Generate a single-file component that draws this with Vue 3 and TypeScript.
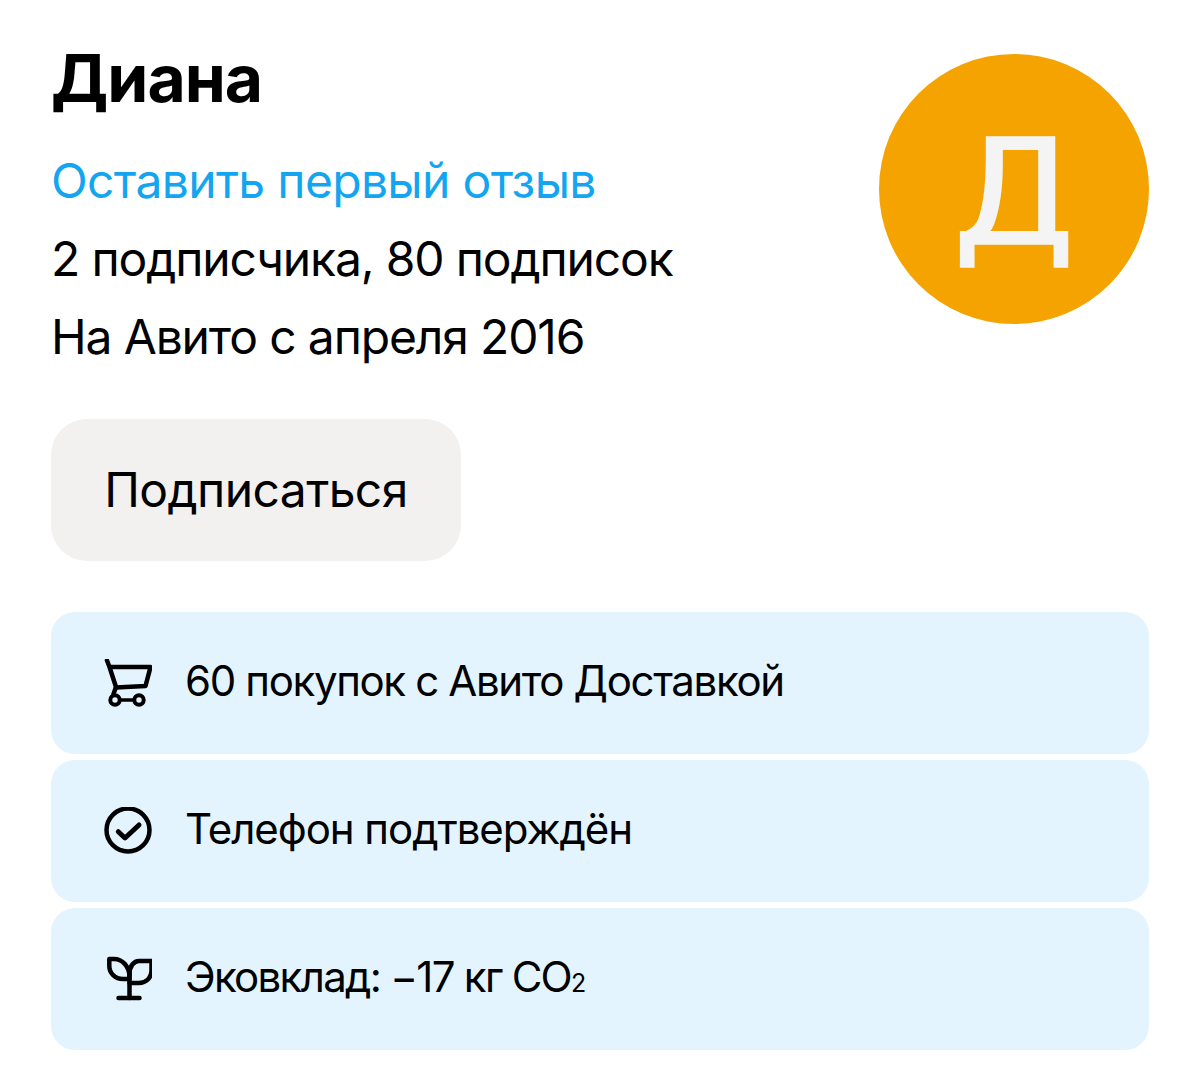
<script setup lang="ts">
interface Badge { id: string; text: string }
const badges: Badge[] = [
  { id: 'cart', text: '60 покупок с Авито Доставкой' },
  { id: 'check', text: 'Телефон подтверждён' },
  { id: 'eco', text: 'Эковклад: −17 кг CO' },
]
</script>

<template>
  <main class="page">
    <section class="head">
      <div class="info">
        <h1 class="name">Диана</h1>
        <a class="link">Оставить первый отзыв</a>
        <p class="line">2 подписчика, 80 подписок</p>
        <p class="line">На Авито с апреля 2016</p>
      </div>
      <div class="avatar"><span>Д</span></div>
    </section>
    <button class="subscribe">Подписаться</button>
    <ul class="badges">
      <li v-for="b in badges" :key="b.id" class="badge">
        <svg class="icon" viewBox="0 0 48 48" fill="none" stroke="#000" stroke-width="4.500" stroke-linecap="round" stroke-linejoin="round">
          <template v-if="b.id === 'cart'">
            <path d="M3 1.500 L5.500 8 L12 28 L9.500 35"/>
            <path d="M6 8 H46.500 L41.500 27 L12 28.500"/>
            <circle cx="11" cy="41" r="4.700" stroke-width="4"/>
            <circle cx="35" cy="41" r="4.700" stroke-width="4"/>
            <path d="M16 41 H30" stroke-width="3.500"/>
          </template>
          <template v-else-if="b.id === 'check'">
            <circle cx="24" cy="23" r="21.500"/>
            <path d="M14.300 24.700 L21 31 L35 18" stroke-width="5"/>
          </template>
          <template v-else>
            <path d="M25.500 22 C25.500 11 18 4 10 4 H5.300 V11 C5.300 18 11 24 19 24 H25.500"/>
            <path d="M25.500 19 C25.500 11 30 6 35 6 H47.500 V15 C47.500 23 42 28 35 28 H25.500"/>
            <path d="M25.500 19 V43"/>
            <path d="M14.500 43 H35.500"/>
          </template>
        </svg>
        <span class="text" :class="`text-${b.id}`">{{ b.text }}<span v-if="b.id === 'eco'" class="sub">2</span></span>
      </li>
    </ul>
  </main>
</template>

<style>
html, body { margin: 0; background: #fff; }
</style>

<style scoped>
.page {
  box-sizing: border-box;
  width: 1200px;
  height: 1066px;
  padding: 38px 51px 0;
  font-family: Inter, "Noto Sans", sans-serif;
  color: #000;
  background: #fff;
}
.head { display: flex; justify-content: space-between; align-items: flex-start; height: 381px; }
.info { display: flex; flex-direction: column; }
.name {
  margin: 0;
  font-size: 66px;
  line-height: 80px;
  font-weight: 700;
  letter-spacing: -1px;
}
.link, .line {
  margin: 0;
  font-size: 48px;
  line-height: 78px;
  letter-spacing: -1.150px;
}
.link { color: #14a5f0; margin-top: 24px; letter-spacing: -0.670px; }
.avatar {
  width: 270px;
  height: 270px;
  margin-top: 16px;
  border-radius: 50%;
  background: #f5a300;
  color: #f4f4f4;
  display: flex;
  align-items: center;
  justify-content: center;
  font-family: "DejaVu Sans", sans-serif;
  font-size: 146px;
  line-height: 1;
  -webkit-text-stroke: 1.500px #f4f4f4;
}
.avatar span { display: inline-block; margin-top: 8px; transform: scaleX(1.070); }
.subscribe {
  display: block;
  width: 410px;
  height: 142px;
  border: 0;
  border-radius: 36px;
  background: #f2f1f0;
  font: inherit;
  font-size: 48px;
  letter-spacing: -0.600px;
  line-height: 138px;
  color: #000;
  padding: 0;
}
.badges { list-style: none; margin: 51px 0 0; padding: 0; display: flex; flex-direction: column; gap: 6px; }
.badge {
  height: 142px;
  border-radius: 24px;
  background: #e3f4fe;
  display: flex;
  align-items: center;
  padding-left: 53px;
  gap: 33px;
}
.icon { width: 48px; height: 48px; flex: none; }
.text { font-size: 42px; letter-spacing: -1.050px; margin-top: -6px; }
.text-cart { letter-spacing: -1.350px; }
.text-eco { letter-spacing: -1.700px; }
.sub { font-size: 25px; letter-spacing: 0; }
</style>
